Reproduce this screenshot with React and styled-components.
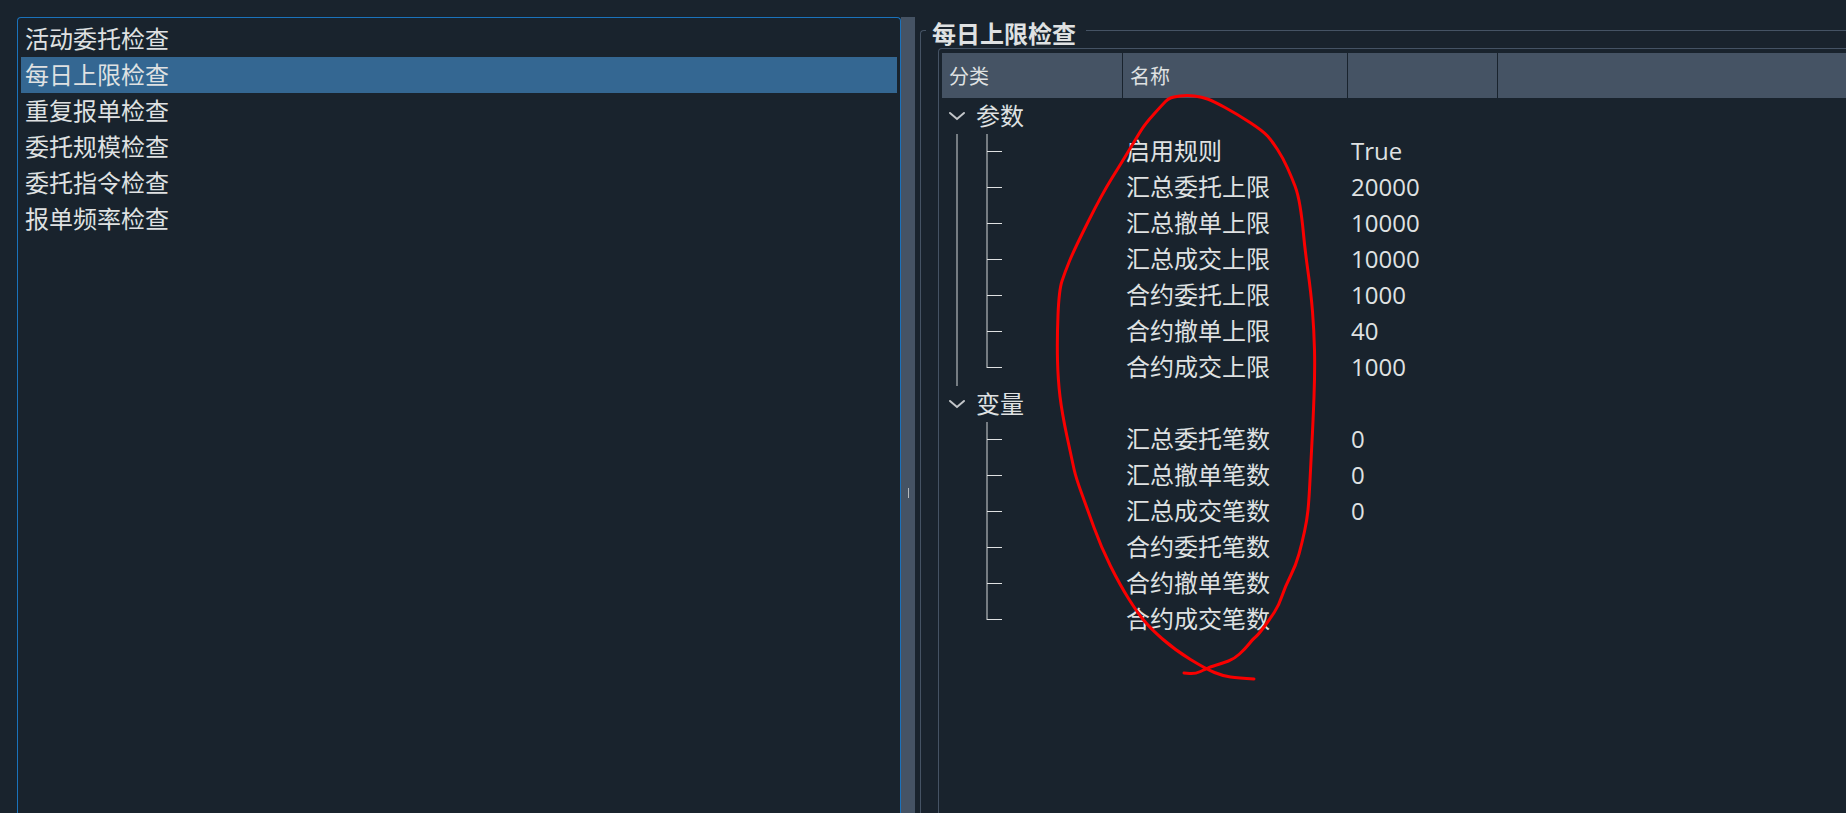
import React, { useState } from "react";
import styled, { createGlobalStyle } from "styled-components";

//style
const GlobalStyle = createGlobalStyle`
  * {
    box-sizing: border-box;
  }
  body {
    margin: 0;
    background-color: #19232d;
    color: #dfe1e2;
    font-family: "Open Sans", "Noto Sans CJK SC", sans-serif;
    font-size: 24px;
    line-height: 36px;
  }
  button {
    font: inherit;
    color: inherit;
    background: none;
    border: none;
    padding: 0;
    margin: 0;
    cursor: pointer;
  }
`;

const StyledPage = styled.div`
  display: grid;
  grid-template-columns: minmax(0, 884fr) 14px minmax(0, 931fr);
  min-height: 100vh;
  padding: 17px 0 0 17px;
`;

const RuleList = styled.ul`
  margin: 0;
  padding: 3px;
  list-style: none;
  border: 1px solid #1a72bb;
  border-bottom: none;
  border-radius: 4px 4px 0 0;
`;

const RuleButton = styled.button`
  display: block;
  width: 100%;
  height: 36px;
  padding-left: 4px;
  text-align: left;
  white-space: nowrap;
  background-color: ${(props) => (props.$active ? "#346792" : "transparent")};
`;

const Splitter = styled.div`
  display: grid;
  grid-template-rows: 471fr 10px 315fr;
  justify-content: center;
  background-color: #455364;
  cursor: col-resize;
  span {
    grid-row: 2;
    width: 1px;
    background-color: #b4b8bc;
  }
`;

const RuleGroup = styled.fieldset`
  display: flex;
  flex-direction: column;
  min-width: 0;
  margin: 0 0 0 5px;
  padding: 5px 0 0 17px;
  border: 1px solid #455364;
  border-width: 1px 0 0 1px;
  border-radius: 4px 0 0 0;
  legend {
    margin-left: -12px;
    padding: 8px 10px 0 6px;
    font-weight: bold;
    line-height: 18px;
  }
`;

const TreeFrame = styled.div`
  position: relative;
  flex: 1;
  padding: 4px 0 0 3px;
  border: 1px solid #455364;
  border-width: 1px 0 0 1px;
  border-radius: 4px 0 0 0;
`;

const Tree = styled.table`
  width: 100%;
  table-layout: fixed;
  border-collapse: separate;
  border-spacing: 0;
  th {
    height: 45px;
    padding: 2px 0 0 7px;
    font-size: 20px;
    font-weight: normal;
    text-align: left;
    background-color: #455364;
    border-right: 1px solid #19232d;
  }
  th:last-child {
    border-right: none;
  }
  td {
    height: 36px;
    padding: 0 0 0 3px;
    line-height: 34px;
    vertical-align: top;
    white-space: nowrap;
  }
  td:first-child {
    padding: 0;
  }
`;

const Col = styled.col`
  width: ${(props) => props.$width};
`;

const GroupToggle = styled.button`
  display: flex;
  align-items: center;
  svg {
    width: 30px;
    height: 36px;
    margin-right: 4px;
    transform: ${(props) => (props.$open ? "none" : "rotate(-90deg)")};
  }
`;

const Branch = styled.div`
  display: flex;
  height: 36px;
`;

const Trunk = styled.span`
  width: 16px;
  margin-right: 14px;
  border-right: 2px solid ${(props) => (props.$visible ? "#757c82" : "transparent")};
`;

const Twig = styled.span`
  display: grid;
  grid-template-columns: 15px 15px;
  grid-template-rows: 18px 18px;
  &::before {
    content: "";
    grid-column: 2;
    grid-row: ${(props) => (props.$last ? "1" : "1 / 3")};
    width: 2px;
    margin-left: -1px;
    background-color: #757c82;
  }
  &::after {
    content: "";
    grid-column: 2;
    grid-row: 1;
    align-self: end;
    height: 1px;
    background-color: #dfe1e2;
  }
`;

// hand drawn mark, lies over the tree
const Ink = styled.svg`
  position: absolute;
  left: 111px;
  top: 41px;
  width: 270px;
  height: 600px;
  pointer-events: none;
`;

const rules = [
  "活动委托检查",
  "每日上限检查",
  "重复报单检查",
  "委托规模检查",
  "委托指令检查",
  "报单频率检查",
];

const groups = [
  {
    title: "参数",
    rows: [
      ["启用规则", "True"],
      ["汇总委托上限", "20000"],
      ["汇总撤单上限", "10000"],
      ["汇总成交上限", "10000"],
      ["合约委托上限", "1000"],
      ["合约撤单上限", "40"],
      ["合约成交上限", "1000"],
    ],
  },
  {
    title: "变量",
    rows: [
      ["汇总委托笔数", "0"],
      ["汇总撤单笔数", "0"],
      ["汇总成交笔数", "0"],
      ["合约委托笔数", ""],
      ["合约撤单笔数", ""],
      ["合约成交笔数", ""],
    ],
  },
];

const inkPoints = [
  [204, 589], [188, 588], [173, 586], [156, 579], [125, 560], [100, 538],
  [87, 522], [70, 495], [51, 457], [37, 418], [26, 388], [22, 370],
  [12, 323], [8, 290], [7, 250], [9, 200], [15, 182], [24, 160],
  [52, 104], [72, 72], [87, 47], [95, 34], [113, 14], [118, 9],
  [123, 7], [137, 5], [152, 7], [163, 11], [187, 24], [213, 41],
  [222, 51], [233, 68], [242, 88], [248, 104], [252, 128], [255, 160],
  [261, 203], [264, 240], [265, 280], [263, 333], [261, 370], [259, 410],
  [257, 430], [252, 453], [246, 475], [235, 497], [229, 515], [220, 529],
  [208, 545], [203, 549], [195, 559], [184, 569], [173, 573], [160, 577],
  [156, 579], [145, 584], [134, 583],
];

//functions
const smoothPath = (points) => {
  let d = `M${points[0].join(" ")}`;
  for (let i = 1; i < points.length - 1; i++) {
    const [x, y] = points[i];
    const [nx, ny] = points[i + 1];
    d += ` Q${x} ${y} ${(x + nx) / 2} ${(y + ny) / 2}`;
  }
  return `${d} L${points[points.length - 1].join(" ")}`;
};

const TreeGroup = ({ group, isLast }) => {
  const [open, setOpen] = useState(true);

  return (
    <tbody>
      <tr>
        <td colSpan={4}>
          <GroupToggle $open={open} aria-expanded={open} onClick={() => setOpen(!open)}>
            <svg viewBox="0 0 30 36" fill="none" stroke="#c3c6c9" strokeWidth="2">
              <path d="M8 15 L15 21 L22 15" strokeLinecap="round" />
            </svg>
            {group.title}
          </GroupToggle>
        </td>
      </tr>
      {open
        ? group.rows.map(([name, value], i) => (
            <tr key={name}>
              <td>
                <Branch>
                  <Trunk $visible={!isLast} />
                  <Twig $last={i === group.rows.length - 1} />
                </Branch>
              </td>
              <td>{name}</td>
              <td>{value}</td>
              <td></td>
            </tr>
          ))
        : null}
    </tbody>
  );
};

const App = () => {
  const [selected, setSelected] = useState(rules[1]);

  return (
    <StyledPage>
      <GlobalStyle />
      <RuleList>
        {rules.map((rule) => (
          <li key={rule}>
            <RuleButton $active={rule === selected} onClick={() => setSelected(rule)}>
              {rule}
            </RuleButton>
          </li>
        ))}
      </RuleList>
      <Splitter>
        <span />
      </Splitter>
      <RuleGroup>
        <legend>{selected}</legend>
        <TreeFrame>
          <Tree>
            <colgroup>
              <Col $width="181px" />
              <Col $width="225px" />
              <Col $width="150px" />
              <Col $width="auto" />
            </colgroup>
            <thead>
              <tr>
                <th>分类</th>
                <th>名称</th>
                <th></th>
                <th></th>
              </tr>
            </thead>
            {groups.map((group, i) => (
              <TreeGroup key={group.title} group={group} isLast={i === groups.length - 1} />
            ))}
          </Tree>
          <Ink viewBox="0 0 270 600" fill="none" stroke="#f90000" strokeWidth="3">
            <path d={smoothPath(inkPoints)} strokeLinecap="round" strokeLinejoin="round" />
          </Ink>
        </TreeFrame>
      </RuleGroup>
    </StyledPage>
  );
};

export default App;
